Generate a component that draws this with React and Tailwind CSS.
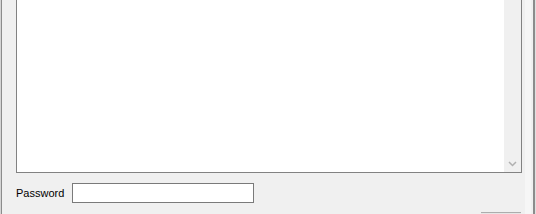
import React from "react";

export default function App() {
  return (
    <div className="w-[536px] h-[214px] bg-[#f0f0f0] overflow-hidden flex" style={{ fontFamily: '"Liberation Sans", Arial, sans-serif' }}>
      <div className="w-[1px] bg-[#d4d4d4]" />
      <div className="w-[1px] bg-[#8c8c8c]" />
      <div className="flex-1 flex flex-col pl-[14px]">
        <div className="h-[193px] shrink-0 mt-[-20px] border border-[#828282] bg-white flex justify-end">
          <div className="w-[17px] bg-[#f0f0f0] flex flex-col justify-end items-center pb-[4px]">
            <svg width="9" height="6" viewBox="0 0 9 6" className="mb-[1px]">
              <path d="M1 1 L4.5 4.5 L8 1" fill="none" stroke="#b0b0b0" strokeWidth="1.5" />
            </svg>
          </div>
        </div>
        <div className="flex items-center mt-[10px] h-[20px] shrink-0">
          <span className="text-[11px] text-black w-[56px] leading-none">Password</span>
          <div className="w-[182px] h-[20px] border border-[#7a7a7a] bg-white" />
        </div>
        <div className="flex justify-end mt-[9px] pr-[1px] shrink-0">
          <div className="w-[40px] h-[10px] border-t border-[#adadad] bg-[#e6e6e6]" />
        </div>
      </div>
      <div className="w-[11px] flex">
        <div className="w-[3px]" />
        <div className="w-[6px] bg-[#f6f6f6]" />
      </div>
      <div className="w-[2px] bg-[#8c8c8c]" />
      <div className="w-[1px] bg-[#e0e0e0]" />
    </div>
  );
}
